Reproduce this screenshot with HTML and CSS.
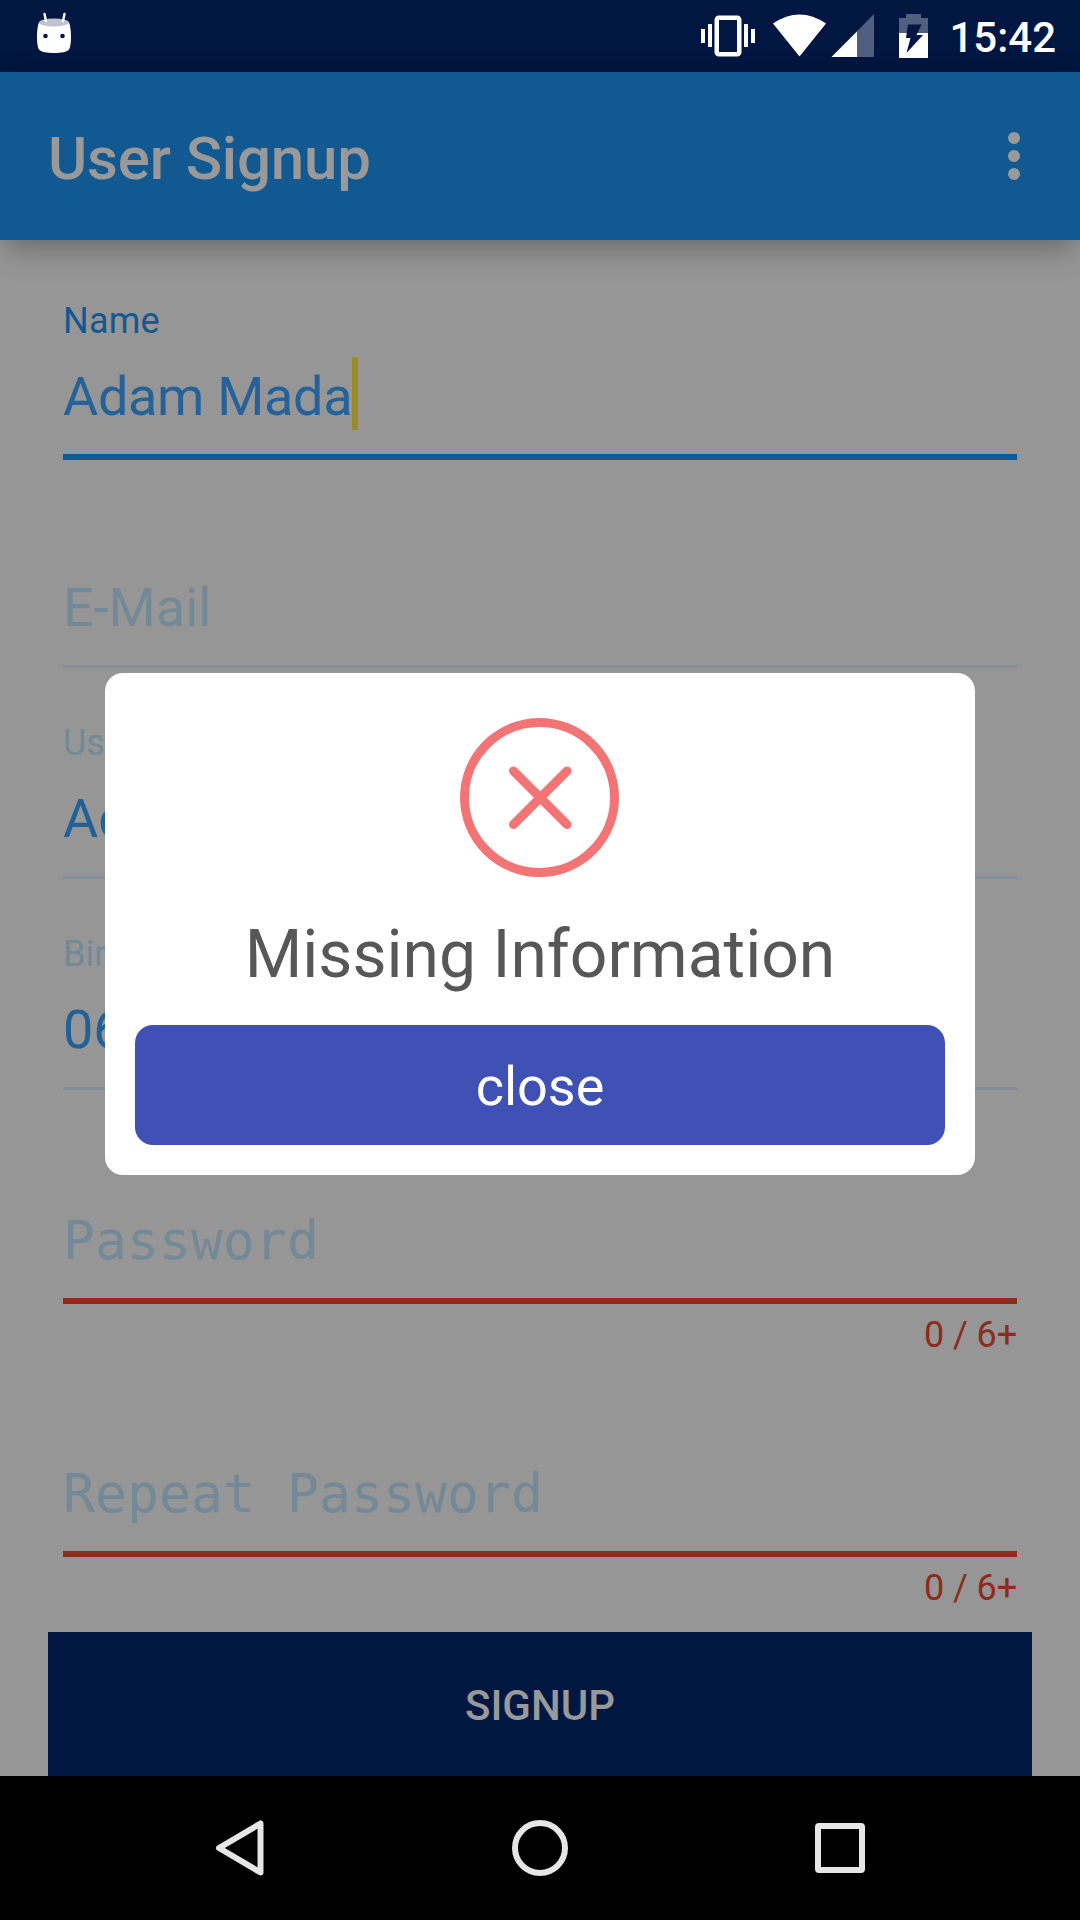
FILE: index.html
```html
<!DOCTYPE html>
<html lang="en">
<head>
<meta charset="utf-8">
<title>User Signup</title>
<link rel="stylesheet" href="styles.css">
</head>
<body>
<div class="screen">
  <header class="status">
    <svg class="status-app" width="36" height="42" viewBox="0 0 36 42">
      <path d="M3 10.500C2 12 1 18 1 25s1 11 2 12.500c1.500 2.500 8 3.500 15 3.500s13.500-1 15-3.500c1-1.500 2-5.500 2-12.500s-1-13-2-14.500z" fill="#fff"/>
      <ellipse cx="18" cy="10.500" rx="15" ry="4" fill="#bfc3d0"/>
      <path d="M8.500 2l1.500 7M28.500 2L27 9" stroke="#fff" stroke-width="2.400" stroke-linecap="round"/>
      <circle cx="9.500" cy="24" r="2.300" fill="#011640"/><circle cx="26.500" cy="24" r="2.300" fill="#011640"/>
    </svg>
    <svg class="status-icons" width="230" height="44" viewBox="0 0 230 44">
      <path d="M1 15h4v14H1zM8 10h4v23H8zM44 10h4v23h-4zM51 15h4v14h-4z" fill="#fff"/>
      <rect x="16.750" y="3.750" width="22.500" height="36.500" rx="2" fill="none" stroke="#fff" stroke-width="4.500"/>
      <path d="M73 9.500Q99.500-8.500 126 9.500L99.500 42.500z" fill="#fff"/>
      <path d="M174 0v43h-42.500z" fill="#505f7d"/>
      <path d="M157 17.500V43h-25.500z" fill="#fff"/>
      <path d="M199 4h7V0h15v4h7v15h-29z" fill="#505f7d"/>
      <path d="M199 19h29v25h-29z" fill="#fff"/>
      <path d="M208 10.500h13.500l-5 10.500h6.500L206.500 39l4-15h-4.500z" fill="#011640"/>
    </svg>
    <span class="clock">15:42</span>
  </header>

  <div class="appbar">
    <h1 class="title">User Signup</h1>
    <svg width="12" height="48" viewBox="0 0 12 48" fill="#999"><circle cx="6" cy="6" r="6"/><circle cx="6" cy="24" r="6"/><circle cx="6" cy="42" r="6"/></svg>
  </div>

  <main class="form">
    <div class="field focused">
      <div class="label">Name</div>
      <div class="value"><span>Adam Mada</span><i class="caret"></i></div>
      <div class="line"></div>
    </div>
    <div class="field">
      <div class="label"></div>
      <div class="value hint">E-Mail</div>
      <div class="line"></div>
    </div>
    <div class="field">
      <div class="label">Username</div>
      <div class="value">Adam</div>
      <div class="line"></div>
    </div>
    <div class="field">
      <div class="label">Birthday</div>
      <div class="value">06</div>
      <div class="line"></div>
    </div>
    <div class="field counted">
      <div class="label"></div>
      <div class="value hint mono">Password</div>
      <div class="line"></div>
      <div class="counter">0 / 6+</div>
    </div>
    <div class="field counted">
      <div class="label"></div>
      <div class="value hint mono">Repeat Password</div>
      <div class="line"></div>
      <div class="counter">0 / 6+</div>
    </div>
  </main>

  <div class="submit">SIGNUP</div>

  <nav class="navbar">
    <svg width="50" height="56" viewBox="0 0 50 56"><path d="M45.500 3.500v49L4 28z" class="stroke"/></svg>
    <svg width="56" height="56" viewBox="0 0 56 56"><circle cx="28" cy="28" r="25" class="stroke"/></svg>
    <svg width="50" height="50" viewBox="0 0 50 50"><rect x="3" y="3" width="44" height="44" rx="1" class="stroke"/></svg>
  </nav>

  <div class="dialog">
    <svg class="error-icon" width="159" height="159" viewBox="0 0 159 159" fill="none" stroke="#f27474" stroke-width="9" stroke-linecap="round">
      <circle cx="79.500" cy="79.500" r="75"/>
      <path d="M53.500 53l53.500 53.500M107 53l-53.500 53.500"/>
    </svg>
    <div class="message">Missing Information</div>
    <div class="close">close</div>
  </div>
</div>
</body>
</html>
```
FILE: styles.css
```css
* { box-sizing: border-box; margin: 0; }
body { background: #969696; font-family: Roboto, sans-serif; }
.screen { position: relative; width: 1080px; height: 1920px; display: flex; flex-direction: column; overflow: hidden; }

.status { height: 72px; flex: none; background: #011640; display: flex; align-items: flex-start; padding: 12px 24px 0 36px; }
.status-icons { margin: 2px 19px 0 auto; }
.clock { color: #fff; font-size: 42px; font-weight: 500; line-height: 52px; }

.appbar { height: 168px; flex: none; background: #125992; display: flex; align-items: center; justify-content: space-between; padding: 0 60px 0 48px; box-shadow: 0 10px 30px -4px rgba(0,0,0,.34); z-index: 1; }
.title { color: #999; font-size: 60px; font-weight: 500; line-height: 70px; letter-spacing: -.15px; padding-top: 5px; }

.form { flex: none; height: 1392px; padding: 60px 63px 0; }
.field { height: 211px; display: flex; flex-direction: column; color: #738998; }
.field.counted { height: 253px; }
.label { height: 42px; line-height: 42px; font-size: 36px; }
.value { height: 63px; margin-top: 23px; line-height: 63px; font-size: 54px; color: #206197; display: flex; align-items: center; }
.value.hint { color: #738998; }
.value.mono { font-family: "DejaVu Sans Mono", monospace; font-size: 53px; letter-spacing: .1px; }
.caret { width: 6px; height: 73px; margin-top: -7px; background: #998c24; }
.line { height: 3px; flex: none; margin-top: 26px; background: #838f98; }
.focused .label { color: #125992; letter-spacing: .25px; }
.focused .value { color: #25629a; letter-spacing: -.33px; }
.focused .line { height: 6px; background: #125992; }
.counted .line { height: 6px; background: #8b2c1c; }
.counter { color: #8b2c1c; font-size: 36px; line-height: 42px; letter-spacing: -.1px; text-align: right; margin-top: 10px; }

.submit { height: 144px; flex: none; margin: 0 48px; background: #011640; color: #999; font-size: 42px; font-weight: 500; line-height: 148px; text-align: center; }

.navbar { height: 144px; flex: none; background: #000; display: flex; align-items: center; justify-content: space-between; padding: 0 215px; }
.stroke { fill: none; stroke: #e6e6e6; stroke-width: 6; stroke-linejoin: round; }

.dialog { position: absolute; z-index: 2; left: 105px; top: 673px; width: 870px; height: 502px; background: #fff; border-radius: 18px; padding: 45px 30px 30px; display: flex; flex-direction: column; align-items: center; }
.error-icon { margin-right: 1px; flex: none; }
.message { margin-top: 38px; height: 80px; line-height: 80px; font-size: 66px; color: #575757; }
.close { width: 100%; height: 120px; margin-top: 30px; border-radius: 18px; background: #3f51b5; color: #fff; font-size: 54px; line-height: 124px; text-align: center; }
```
